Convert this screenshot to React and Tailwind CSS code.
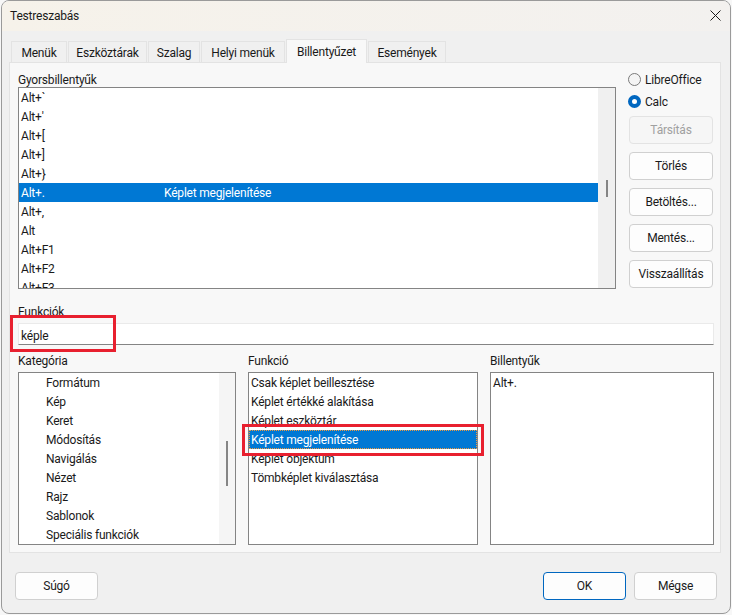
const FONT = "[font-family:'Roboto','Noto_Sans',sans-serif]";

function Row({ children, second, selected }) {
  return (
    <div className={`flex h-[19px] shrink-0 items-center whitespace-nowrap pl-[2px] pt-[2px] leading-[17px] ${selected ? "bg-[#0078d4] text-white" : ""}`}>
      <span className="w-[143px] shrink-0">{children}</span>
      {second ? <span>{second}</span> : null}
    </div>
  );
}

function Btn({ children, disabled, primary, className = "" }) {
  return (
    <div className={`flex h-[28px] items-center justify-center rounded-[4px] border ${primary ? "border-[#0067c0]" : "border-[#d0d0d0]"} ${disabled ? "bg-[#f6f6f6] text-[#a0a0a0] border-[#e3e3e3]" : "bg-[#fdfdfd]"} ${className}`}>
      {children}
    </div>
  );
}

function Tab({ children, active, w }) {
  return active ? (
    <div className={`relative z-10 -mb-px flex h-[24px] items-center justify-center self-end border border-b-0 border-[#e3e3e3] bg-[#f8f8f8] ${w}`}>{children}</div>
  ) : (
    <div className={`flex h-[21px] items-center justify-center self-end border border-b-0 border-[#e3e3e3] bg-[#f0f0f0] pt-[2px] ${w}`}>{children}</div>
  );
}

function Label({ children, className = "" }) {
  return <div className={`h-[15px] leading-[17px] ${className}`}>{children}</div>;
}

function Scroll({ thumbTop, thumbH, bg = "bg-[#f0f0f0]", w = "w-[17px]" }) {
  return (
    <div className={`flex shrink-0 justify-center ${w} ${bg}`}>
      <div style={{ marginTop: thumbTop, height: thumbH }} className="w-[2px] bg-[#858585]" />
    </div>
  );
}

export default function App() {
  return (
    <div className={`h-[615px] w-[732px] overflow-hidden bg-[#f7f7f7] text-[12px] tracking-[-0.2px] text-[#1a1a1a] ${FONT}`}>
      <div className="relative ml-px flex h-[614px] w-[730px] flex-col overflow-hidden rounded-[8px] border border-[#9a9a9a] bg-[#f0f0f0]">
        {/* title bar */}
        <div className="flex h-[30px] shrink-0 items-center justify-between bg-gradient-to-r from-[#f6f2ea] to-[#f3f1ef] pl-[8px] pr-[9px]">
          <span>Testreszabás</span>
          <svg width="11" height="11" viewBox="0 0 11 11" className="mb-[2px]">
            <path d="M.5.5l10 10M10.5.5l-10 10" stroke="#1a1a1a" strokeWidth="1" fill="none" />
          </svg>
        </div>

        {/* tabs */}
        <div className="ml-[9px] mt-[7px] flex h-[24px] shrink-0 items-end gap-px pr-[10px]">
          <Tab w="w-[56px]">Menük</Tab>
          <Tab w="w-[79px]">Eszköztárak</Tab>
          <Tab w="w-[52px]">Szalag</Tab>
          <Tab w="w-[84px]">Helyi menük</Tab>
          <Tab active w="w-[81px]">Billentyűzet</Tab>
          <Tab w="w-[78px]">Események</Tab>
        </div>

        {/* panel */}
        <div className="ml-[7px] flex h-[491px] w-[712px] shrink-0 flex-col border border-[#e3e3e3] bg-[#f8f8f8] pl-[8px] pr-[6px]">
          <div className="mt-[9px] flex">
            <div className="w-[598px] shrink-0">
              <Label>Gyorsbillentyűk</Label>
              <div className="flex h-[202px] overflow-hidden border border-[#848484] bg-white">
                <div className="h-full min-w-0 flex-1 overflow-hidden">
                  <Row>Alt+`</Row>
                  <Row>Alt+'</Row>
                  <Row>Alt+[</Row>
                  <Row>Alt+]</Row>
                  <Row>Alt+{"}"}</Row>
                  <Row selected second="Képlet megjelenítése">Alt+.</Row>
                  <Row>Alt+,</Row>
                  <Row>Alt</Row>
                  <Row>Alt+F1</Row>
                  <Row>Alt+F2</Row>
                  <Row>Alt+F3</Row>
                </div>
                <Scroll thumbTop={92} thumbH={17} />
              </div>
            </div>
            <div className="-mt-[4px] ml-[12px] flex w-[86px] flex-col">
              <div className="flex h-[22px] items-center gap-[4px]">
                <span className="h-[13px] w-[13px] rounded-full border border-[#7a7a7a] bg-[#f4f4f4]" />
                <span className="pt-[2px]">LibreOffice</span>
              </div>
              <div className="flex h-[22px] items-center gap-[4px]">
                <span className="h-[13px] w-[13px] rounded-full border-[4px] border-[#0067c0] bg-white" />
                <span className="pt-[2px]">Calc</span>
              </div>
              <div className="mt-[4px] flex flex-col gap-[8px] pl-px pr-px">
                <Btn disabled>Társítás</Btn>
                <Btn>Törlés</Btn>
                <Btn>Betöltés...</Btn>
                <Btn>Mentés...</Btn>
                <Btn>Visszaállítás</Btn>
              </div>
            </div>
          </div>

          <Label className="mt-[15px]">Funkciók</Label>
          <div className="mt-[4px] flex h-[22px] w-[696px] shrink-0 items-center border border-[#eaeaea] border-b-[#848484] bg-white pl-[2px] pt-[4px]">képle</div>

          <div className="mt-[8px] flex gap-[12px]">
            <div className="w-[218px]">
              <Label className="mb-[4px]">Kategória</Label>
              <div className="flex h-[173px] overflow-hidden border border-[#848484] bg-white">
                <div className="min-w-0 flex-1 overflow-hidden pl-[25px]">
                  {["Formátum", "Kép", "Keret", "Módosítás", "Navigálás", "Nézet", "Rajz", "Sablonok", "Speciális funkciók"].map((t) => (
                    <Row key={t}>{t}</Row>
                  ))}
                </div>
                <Scroll thumbTop={68} thumbH={45} bg="bg-[#f5f5f5]" w="w-[16px]" />
              </div>
            </div>
            <div className="w-[230px]">
              <Label className="mb-[4px]">Funkció</Label>
              <div className="h-[173px] overflow-hidden border border-[#848484] bg-white">
                <Row>Csak képlet beillesztése</Row>
                <Row>Képlet értékké alakítása</Row>
                <Row>Képlet eszköztár</Row>
                <div className="flex h-[19px] items-center whitespace-nowrap border border-dotted border-[#f09a3e] bg-[#0078d4] pl-[1px] pt-[1px] text-white">Képlet megjelenítése</div>
                <Row>Képlet objektum</Row>
                <Row>Tömbképlet kiválasztása</Row>
              </div>
            </div>
            <div className="w-[224px]">
              <Label className="mb-[4px]">Billentyűk</Label>
              <div className="h-[173px] overflow-hidden border border-[#848484] bg-white">
                <Row>Alt+.</Row>
              </div>
            </div>
          </div>
        </div>

        {/* footer */}
        <div className="mt-[19px] flex pl-[13px] pr-[13px]">
          <Btn className="w-[83px]">Súgó</Btn>
          <div className="flex-1" />
          <Btn primary className="w-[83px]">OK</Btn>
          <Btn className="ml-[8px] w-[83px]">Mégse</Btn>
        </div>

        {/* annotation boxes */}
        <div className="absolute left-[8px] top-[314px] h-[37px] w-[106px] border-[3px] border-[#e8202f]" />
        <div className="absolute left-[240px] top-[423px] h-[32px] w-[242px] border-[3px] border-[#e8202f]" />
      </div>
    </div>
  );
}
